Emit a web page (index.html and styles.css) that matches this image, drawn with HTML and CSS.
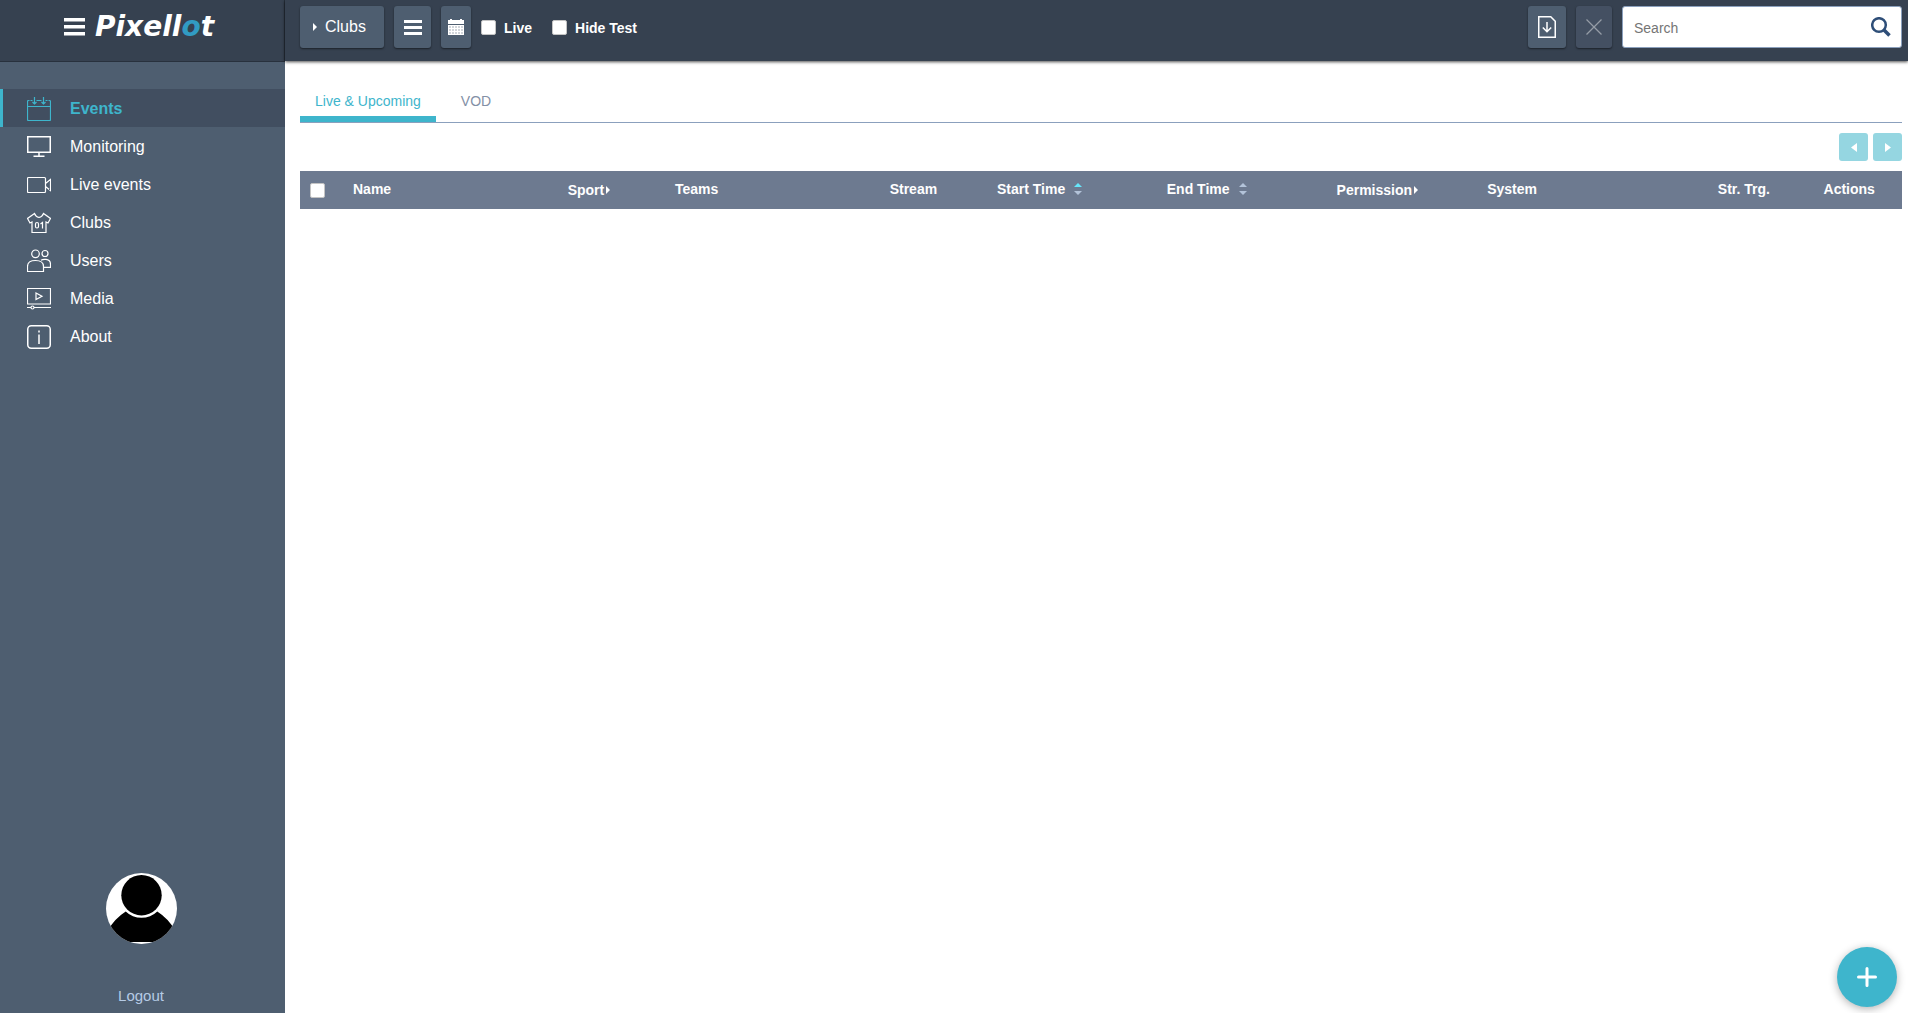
FILE: index.html
```html
<!DOCTYPE html>
<html lang="en">
<head>
<meta charset="utf-8">
<title>Pixellot - Events</title>
<meta name="viewport" content="width=device-width, initial-scale=1">
<link rel="stylesheet" href="styles.css">
</head>
<body>
<div class="app">
  <aside class="sidebar">
    <div class="brand">
      <button class="menu-toggle" type="button" aria-label="Toggle menu">
        <svg width="21" height="18" viewBox="0 0 21 18" fill="currentColor"><path d="M0 0h21v3.500H0zM0 7h21v3.500H0zM0 14h21v3.500H0z"/></svg>
      </button>
      <a class="logo" href="#">Pixell<span class="logo-accent">o</span>t</a>
    </div>
    <nav class="nav">
      <a class="nav-item active" href="#">
        <svg class="icon" viewBox="0 0 24 24"><path d="M2.500 3.500h-1q-1 0-1 1v18q0 1 1 1h21q1 0 1-1v-18q0-1-1-1h-1M.5 9.500h23M9.500 3.500h5"/><path d="M7.500 0v7M5.500 5l2 2 2-2M16.500 0v7M14.500 5l2 2 2-2M3.500 3.500h2M18.500 3.500h2"/></svg>
        Events</a>
      <a class="nav-item" href="#">
        <svg class="icon" viewBox="0 0 24 24"><path class="bold" d="M.75 1.750h22.500v15.500H.75zM12 17.500v3.500M6.500 21.250h11"/></svg>
        Monitoring</a>
      <a class="nav-item" href="#">
        <svg class="icon" viewBox="0 0 24 24"><path d="M1.500 4.500h16q1 0 1 1v13q0 1-1 1h-16q-1 0-1-1v-13q0-1 1-1zM18.500 10.500l5-4v11l-5-4"/></svg>
        Live events</a>
      <a class="nav-item" href="#">
        <svg class="icon" viewBox="0 0 24 24"><path d="M7.500 2.500L.5 7.500l2.500 4.500 2-1v10.500h14V11l2 1 2.500-4.500-7-5q-1 3-4.500 4-3.500-1-4.500-4z"/><rect x="8.500" y="11.500" width="3" height="5.500" rx="1.500"/><path d="M13.500 13l2-1.500v6"/></svg>
        Clubs</a>
      <a class="nav-item" href="#">
        <svg class="icon" viewBox="0 0 24 24"><circle cx="8.500" cy="4.800" r="3.800"/><circle cx="18" cy="4.500" r="3"/><path d="M.5 22.500v-5q0-6 8-6t8 6v5zM14 11.200q2-1.200 5-.8 4.500.6 4.500 4.900v3h-7"/></svg>
        Users</a>
      <a class="nav-item" href="#">
        <svg class="icon" viewBox="0 0 24 24"><path d="M.5 1.500h23v15.500H.5zM9 6l6 3.200L9 12.500zM0 20.500h4M7 20.500h17"/><circle cx="5.500" cy="20.500" r="1.500"/></svg>
        Media</a>
      <a class="nav-item" href="#">
        <svg class="icon" viewBox="0 0 24 24"><rect class="bold" x=".75" y=".75" width="22.500" height="22.500" rx="3.500"/><path class="bold" d="M12 9.500V19M12 5.500V7.500"/></svg>
        About</a>
    </nav>
    <div class="account">
      <svg class="avatar" viewBox="0 0 72 72" role="img" aria-label="User avatar">
        <clipPath id="disc"><circle cx="36" cy="36" r="36"/></clipPath>
        <circle cx="36" cy="36" r="36" fill="#fff"/>
        <path clip-path="url(#disc)" d="M2 58Q9 46 20 39a23 23 0 0 0 32 0Q63 46 70 58v12H2z"/>
        <circle cx="36" cy="22.500" r="20.500"/>
      </svg>
      <a class="logout" href="#">Logout</a>
    </div>
  </aside>

  <div class="page">
    <header class="topbar">
      <button class="btn btn-clubs" type="button"><svg width="4" height="8" viewBox="0 0 4 8" fill="currentColor"><path d="M0 0l4 4-4 4z"/></svg>Clubs</button>
      <button class="btn btn-list" type="button" aria-label="List"><svg width="18" height="15" viewBox="0 0 18 15" fill="currentColor"><path d="M0 0h18v3H0zM0 6h18v3H0zM0 12h18v3H0z"/></svg></button>
      <button class="btn btn-date" type="button" aria-label="Calendar"><svg width="16" height="16" viewBox="0 0 16 16" fill="currentColor"><path d="M0 1h2V0h2v1h8V0h2v1h2v4H0z"/><path fill-opacity=".75" d="M0 6h16v10H0z"/><path d="M0 6h1v10H0zM3 6h1v10H3zM6 6h1v10H6zM9 6h1v10H9zM12 6h1v10h-1zM15 6h1v10h-1zM0 6h16v1H0zM0 9h16v1H0zM0 12h16v1H0zM0 15h16v1H0z"/></svg></button>
      <label class="check"><input class="box" type="checkbox">Live</label>
      <label class="check"><input class="box" type="checkbox">Hide Test</label>
      <div class="tools">
        <button class="btn btn-export" type="button" aria-label="Export"><svg width="18" height="22" viewBox="0 0 18 22" fill="none" stroke="currentColor" stroke-width="1.500"><path d="M.75.75h12l4.500 4.500v16H.75zM9 6v10M4.800 11.500L9 15.700l4.200-4.200"/></svg></button>
        <button class="btn btn-clear" type="button" aria-label="Clear" disabled><svg width="16" height="16" viewBox="0 0 16 16" fill="none" stroke="currentColor" stroke-width="1.300"><path d="M.5.5l15 15M15.500.5l-15 15"/></svg></button>
        <form class="search">
          <input class="search-input" type="search" placeholder="Search" aria-label="Search">
          <button class="search-btn" type="button" aria-label="Search"><svg width="20" height="20" viewBox="0 0 20 20" fill="none" stroke="currentColor"><circle cx="8" cy="8" r="6.800" stroke-width="2.500"/><path d="M12.500 12.500l6 6" stroke-width="3.500"/></svg></button>
        </form>
      </div>
    </header>

    <main class="content">
      <nav class="tabs">
        <a class="tab active" href="#">Live &amp; Upcoming</a>
        <a class="tab" href="#">VOD</a>
      </nav>
      <div class="pager">
        <button class="page-btn" type="button" aria-label="Previous page" disabled><svg width="6" height="9" viewBox="0 0 6 9" fill="currentColor"><path d="M6 0v9L0 4.500z"/></svg></button>
        <button class="page-btn" type="button" aria-label="Next page" disabled><svg width="6" height="9" viewBox="0 0 6 9" fill="currentColor"><path d="M0 0v9l6-4.500z"/></svg></button>
      </div>
      <table class="events">
        <colgroup>
          <col class="c-check"><col class="c-wide"><col class="c-small"><col class="c-wide"><col class="c-small"><col class="c-time"><col class="c-time"><col class="c-perm"><col class="c-system"><col class="c-target"><col>
        </colgroup>
        <thead>
          <tr>
            <th class="check-cell"><input class="box" type="checkbox" aria-label="Select all"></th>
            <th>Name</th>
            <th class="filter-cell"><span class="filter">Sport<svg width="4" height="8" viewBox="0 0 4 8" fill="currentColor"><path d="M0 0l4 4-4 4z"/></svg></span></th>
            <th>Teams</th>
            <th>Stream</th>
            <th><span class="sort">Start Time<svg width="8" height="12" viewBox="0 0 8 12"><path class="on" d="M0 4l4-4 4 4z"/><path d="M0 8h8l-4 4z"/></svg></span></th>
            <th><span class="sort">End Time<svg width="8" height="12" viewBox="0 0 8 12"><path d="M0 4l4-4 4 4z"/><path d="M0 8h8l-4 4z"/></svg></span></th>
            <th class="filter-cell"><span class="filter">Permission<svg width="4" height="8" viewBox="0 0 4 8" fill="currentColor"><path d="M0 0l4 4-4 4z"/></svg></span></th>
            <th>System</th>
            <th>Str. Trg.</th>
            <th>Actions</th>
          </tr>
        </thead>
        <tbody></tbody>
      </table>
    </main>
  </div>
</div>
<button class="fab" type="button" aria-label="Add event"><svg width="20" height="20" viewBox="0 0 20 20" fill="none" stroke="currentColor" stroke-width="3" stroke-linecap="round"><path d="M10 1.500v17M1.500 10h17"/></svg></button>
</body>
</html>
```
FILE: styles.css
```css
* { box-sizing: border-box; }

body {
  margin: 0;
  background: #fff;
  color: #fff;
  font-family: "Liberation Sans", Arial, sans-serif;
  font-size: 14px;
}

a { color: inherit; text-decoration: none; }

button {
  border: 0;
  padding: 0;
  color: inherit;
  font: inherit;
  cursor: pointer;
}

svg { display: block; flex: none; }

.app { display: flex; min-height: 100vh; }

/* Sidebar */
.sidebar {
  display: flex;
  flex: none;
  flex-direction: column;
  width: 285px;
  background: #4e5e70;
}

.brand {
  display: flex;
  align-items: center;
  gap: 10px;
  height: 62px;
  padding: 0 0 8px 64px;
  background: #364150;
  border-right: 1px solid #28313d;
  border-bottom: 1px solid #28313d;
}

.menu-toggle { background: none; }

.logo {
  font-family: "DejaVu Sans", sans-serif;
  font-size: 28px;
  font-style: italic;
  font-weight: bold;
  line-height: 32px;
}

.logo-accent { color: #319bc3; }

.nav { padding-top: 27px; }

.nav-item {
  display: flex;
  align-items: center;
  gap: 19px;
  height: 38px;
  padding: 2px 0 0 27px;
  font-size: 16px;
}

.nav-item.active {
  padding-left: 24px;
  border-left: 3px solid #3eb5cc;
  background: #414e60;
  color: #3eb5cc;
  font-weight: bold;
}

.icon {
  width: 24px;
  height: 24px;
  fill: none;
  stroke: currentColor;
  stroke-width: 1.2;
}

.icon .bold { stroke-width: 1.5; }

.account {
  display: flex;
  flex-direction: column;
  align-items: center;
  gap: 43px;
  margin-top: auto;
  padding: 0 3px 8px 0;
}

.avatar { width: 71px; height: 71px; }

.logout {
  color: #b5cbe5;
  font-size: 15px;
  line-height: 18px;
}

/* Top bar */
.page { flex: 1; min-width: 0; }

.topbar {
  display: flex;
  gap: 10px;
  height: 61px;
  padding: 6px 6px 0 15px;
  background: #364150;
  box-shadow: 0 1px 3px rgba(0, 0, 0, .7);
}

.btn {
  display: flex;
  align-items: center;
  justify-content: center;
  height: 42px;
  border-radius: 3px;
  background: #4e5e70;
  box-shadow: 0 1px 2px rgba(0, 0, 0, .5);
}

.btn:disabled { background: #445062; color: #959ca6; }

.btn-clubs {
  justify-content: flex-start;
  gap: 8px;
  width: 84px;
  padding-left: 13px;
  font-size: 16px;
}

.btn-list { width: 37px; }
.btn-date { width: 30px; }
.btn-export { width: 38px; }
.btn-clear { width: 36px; }

.check {
  display: flex;
  align-items: center;
  gap: 8px;
  height: 43px;
  margin-right: 10px;
  font-weight: bold;
}

.box {
  appearance: none;
  width: 15px;
  height: 15px;
  margin: 0;
  border: 1px solid #c4c4c4;
  border-radius: 2px;
  background: #fff;
}

.tools { display: flex; gap: 10px; margin-left: auto; }

.search {
  display: flex;
  align-items: center;
  width: 280px;
  height: 42px;
  padding: 0 10px 0 11px;
  border: 1px solid #8ba0bd;
  border-radius: 3px;
  background: #fff;
}

.search-input {
  flex: 1;
  min-width: 0;
  padding: 2px 0 0;
  border: 0;
  outline: 0;
  background: none;
  color: #364150;
  font: inherit;
}

.search-input::placeholder { color: #757575; }

.search-btn { background: none; color: #2e4e78; }

/* Content */
.content { padding: 21px 6px 0 15px; }

.tabs {
  display: flex;
  gap: 10px;
  border-bottom: 1px solid #8ba0bd;
}

.tab {
  height: 40px;
  padding: 0 15px;
  border-bottom: 6px solid transparent;
  color: #8390a6;
  line-height: 38px;
}

.tab.active { border-color: #3eb5cc; color: #3eb5cc; }

.pager {
  display: flex;
  justify-content: flex-end;
  gap: 5px;
  padding: 10px 0;
}

.page-btn {
  display: flex;
  align-items: center;
  justify-content: center;
  width: 29px;
  height: 28px;
  border-radius: 3px;
  background: #95d6e1;
  color: #fff;
}

.events {
  width: 100%;
  border-collapse: collapse;
  table-layout: fixed;
  background: #6d7a90;
}

.events th {
  height: 38px;
  padding: 0 0 2px 8px;
  text-align: left;
  line-height: 16px;
  white-space: nowrap;
}

.events .check-cell { padding: 0 0 0 10px; }
.events .filter-cell { padding-bottom: 0; }
.check-cell .box { display: block; }

.c-check { width: 45px; }
.c-wide { width: 13.4%; }
.c-small { width: 6.7%; }
.c-time { width: 10.6%; }
.c-perm { width: 9.4%; }
.c-system { width: 14.4%; }
.c-target { width: 6.6%; }

.filter { display: flex; align-items: center; gap: 2px; }
.sort { display: flex; align-items: center; gap: 9px; fill: #b3c3d9; }
.sort .on { fill: #66e6fa; }

/* Floating action button, over the page */
.fab {
  position: fixed;
  right: 11px;
  bottom: 6px;
  display: flex;
  align-items: center;
  justify-content: center;
  width: 60px;
  height: 60px;
  border-radius: 50%;
  background: #3eb5cc;
  box-shadow: 0 2px 8px rgba(0, 0, 0, .3);
}
```
